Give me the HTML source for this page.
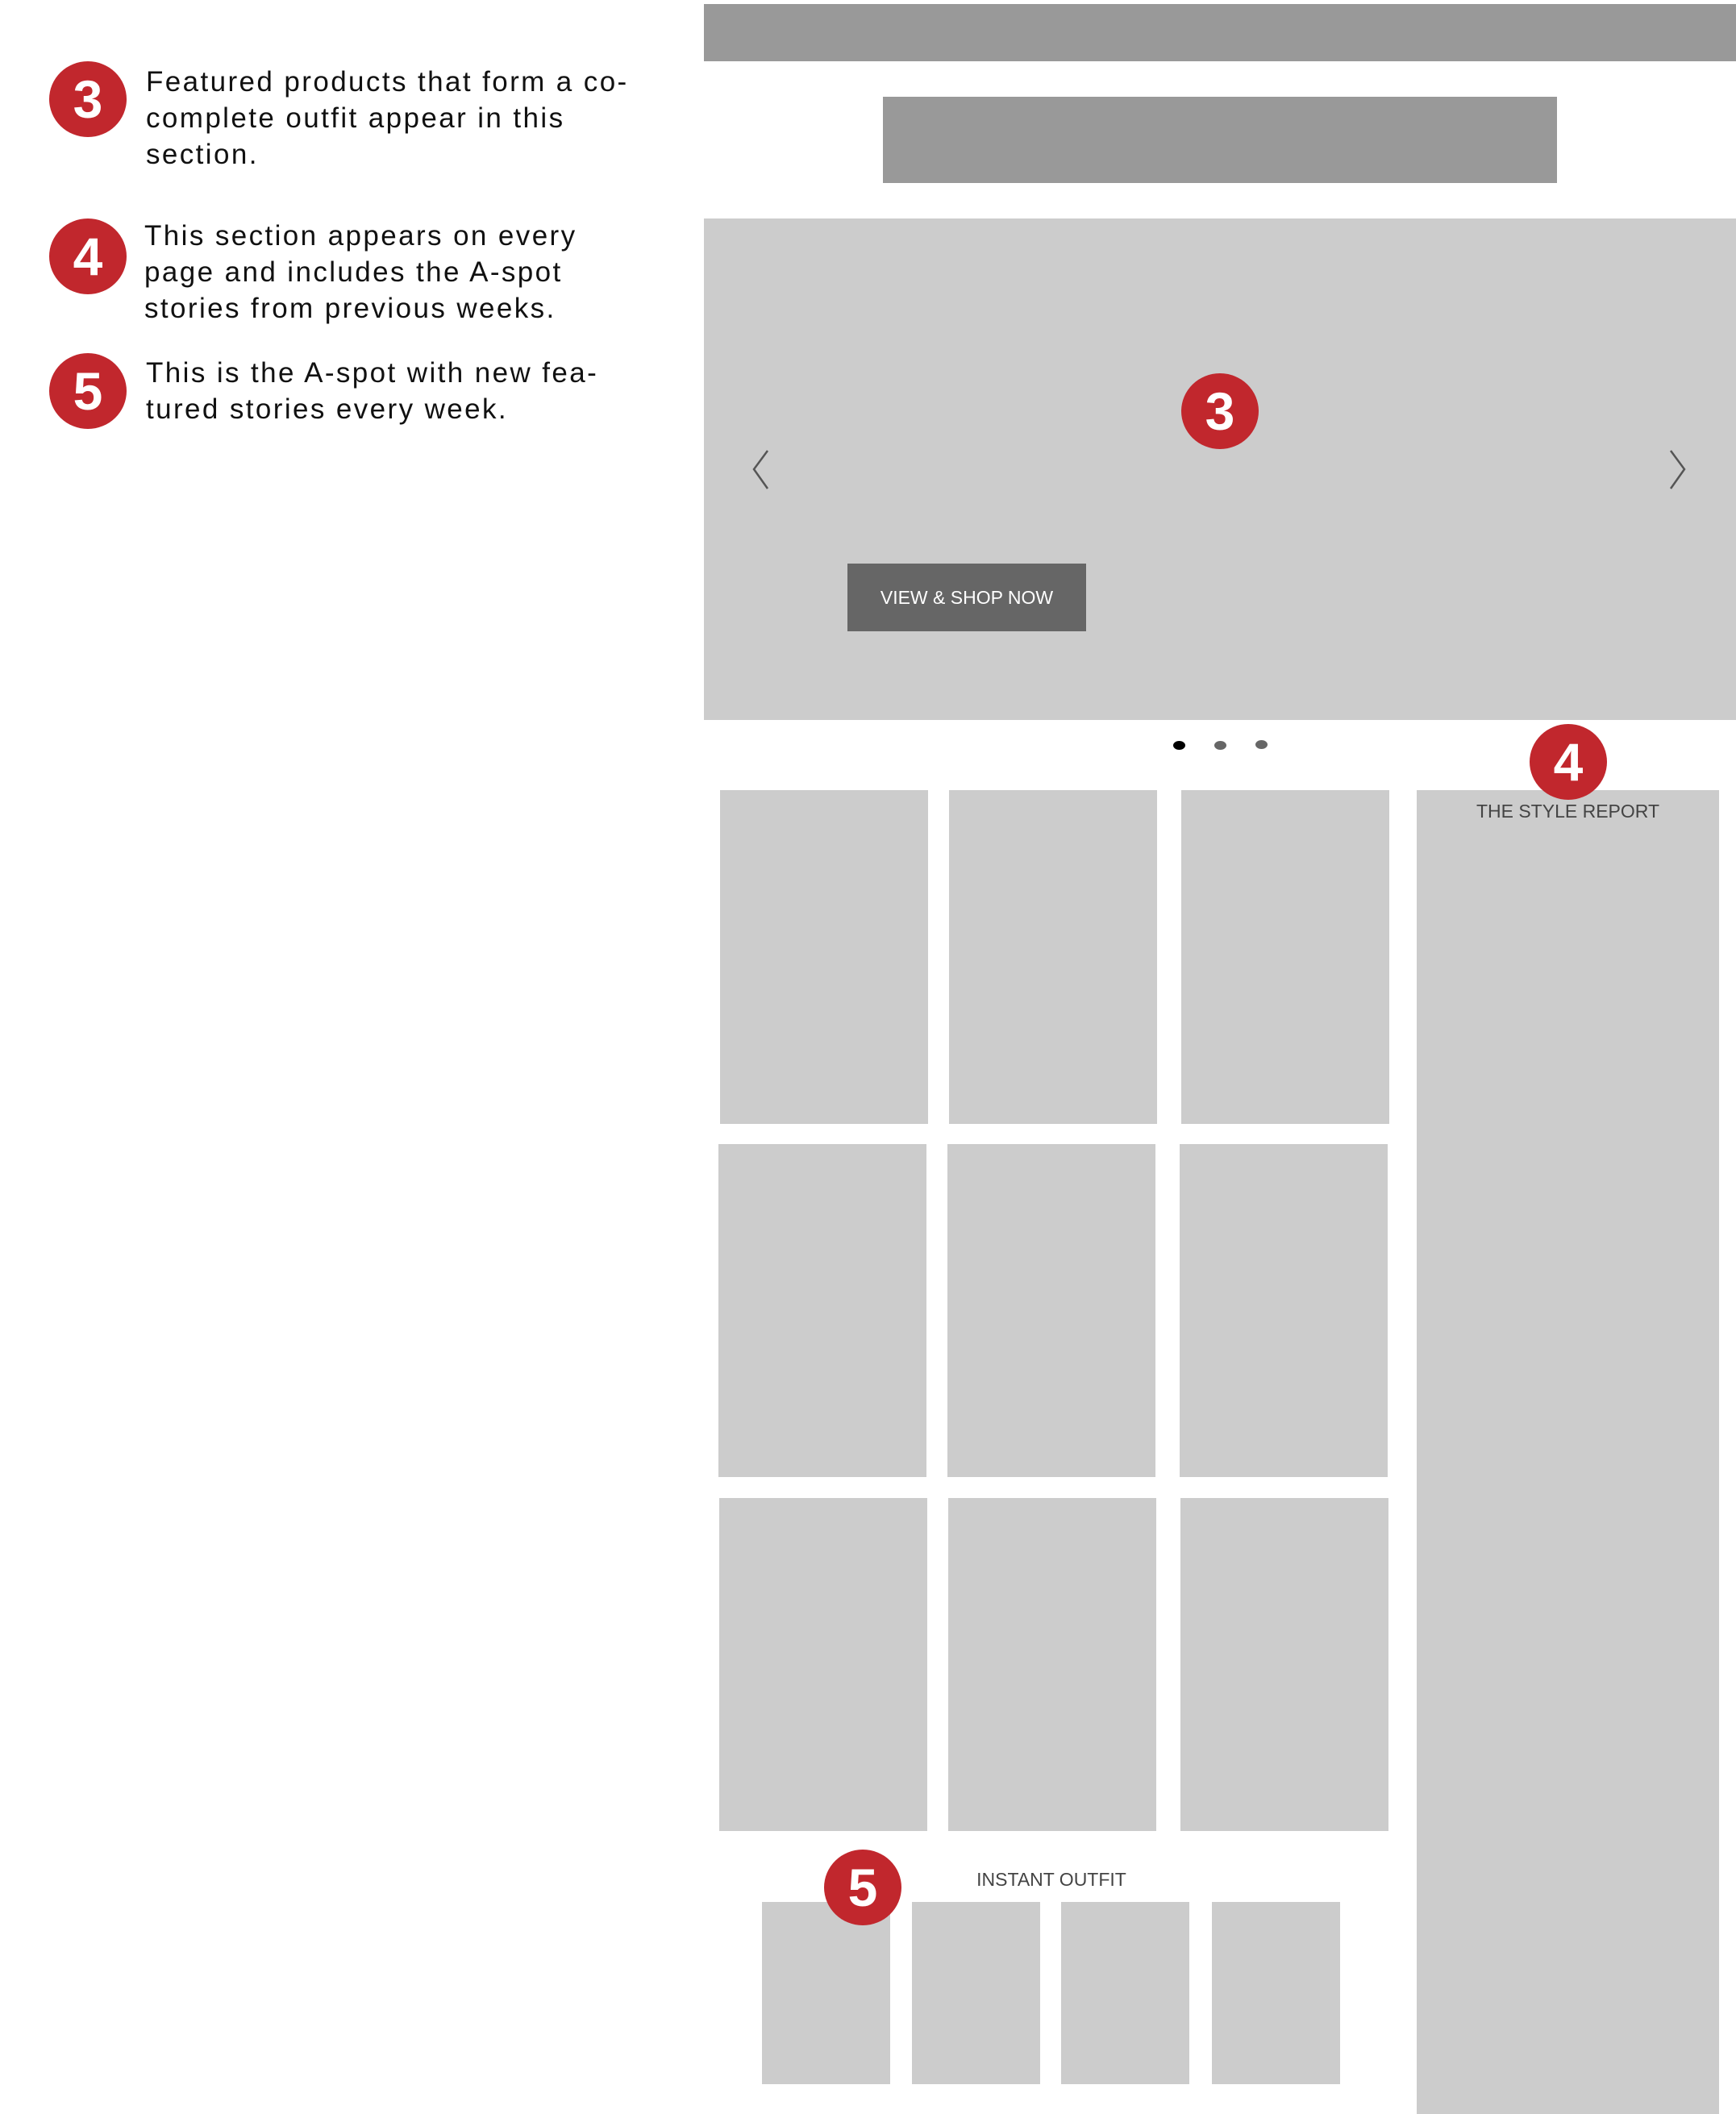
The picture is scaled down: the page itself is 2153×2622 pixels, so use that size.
<!DOCTYPE html>
<html><head><meta charset="utf-8"><style>
*{margin:0;padding:0;box-sizing:border-box}
body{width:2153px;height:2622px;background:#fff;position:relative;overflow:hidden;font-family:"Liberation Sans",sans-serif}
.a{position:absolute}
.g{background:#ccc;position:absolute}
.d{background:#999;position:absolute}
.c{position:absolute;width:96px;height:94px;border-radius:50%;background:#c1272d;color:#fff;font-weight:bold;font-size:66px;text-align:center;line-height:94px}
.t{position:absolute;left:181px;font-size:35px;line-height:45px;color:#111;width:700px;letter-spacing:2.4px;white-space:nowrap}
</style></head><body>
<div class="c" style="left:61px;top:76px">3</div>
<div class="t" style="top:79px">Featured products that form a co-<br>complete outfit appear in this<br>section.</div>
<div class="c" style="left:61px;top:271px">4</div>
<div class="t" style="top:270px;left:179px">This section appears on every<br>page and includes the A-spot<br>stories from previous weeks.</div>
<div class="c" style="left:61px;top:438px">5</div>
<div class="t" style="top:440px">This is the A-spot with new fea-<br>tured stories every week.</div>

<div class="d" style="left:873px;top:5px;width:1280px;height:71px"></div>
<div class="d" style="left:1095px;top:120px;width:836px;height:107px"></div>
<div class="g" style="left:873px;top:271px;width:1280px;height:622px"></div>
<div class="c" style="left:1465px;top:463px">3</div>
<svg class="a" style="left:928px;top:556px" width="30" height="54"><path d="M24 3 L7 26 L24 50" stroke="#555" stroke-width="2.5" fill="none"/></svg>
<svg class="a" style="left:2066px;top:556px" width="30" height="54"><path d="M6 3 L23 26 L6 50" stroke="#555" stroke-width="2.5" fill="none"/></svg>
<div class="a" style="left:1051px;top:699px;width:296px;height:84px;background:#666;color:#fff;font-size:23px;text-align:center;line-height:84px">VIEW &amp; SHOP NOW</div>
<div class="a" style="left:1455px;top:919px;width:15px;height:11px;border-radius:50%;background:#000"></div>
<div class="a" style="left:1506px;top:919px;width:15px;height:11px;border-radius:50%;background:#666"></div>
<div class="a" style="left:1557px;top:918px;width:15px;height:11px;border-radius:50%;background:#666"></div>

<div class="g" style="left:893px;top:980px;width:258px;height:414px"></div>
<div class="g" style="left:1177px;top:980px;width:258px;height:414px"></div>
<div class="g" style="left:1465px;top:980px;width:258px;height:414px"></div>
<div class="g" style="left:891px;top:1419px;width:258px;height:413px"></div>
<div class="g" style="left:1175px;top:1419px;width:258px;height:413px"></div>
<div class="g" style="left:1463px;top:1419px;width:258px;height:413px"></div>
<div class="g" style="left:892px;top:1858px;width:258px;height:413px"></div>
<div class="g" style="left:1176px;top:1858px;width:258px;height:413px"></div>
<div class="g" style="left:1464px;top:1858px;width:258px;height:413px"></div>

<div class="g" style="left:1757px;top:980px;width:375px;height:1642px"></div>
<div class="a" style="left:1757px;top:993px;width:375px;text-align:center;font-size:23px;color:#444">THE STYLE REPORT</div>
<div class="c" style="left:1897px;top:898px">4</div>

<div class="a" style="left:1104px;top:2318px;width:400px;text-align:center;font-size:23px;color:#444">INSTANT OUTFIT</div>
<div class="g" style="left:945px;top:2359px;width:159px;height:226px"></div>
<div class="g" style="left:1131px;top:2359px;width:159px;height:226px"></div>
<div class="g" style="left:1316px;top:2359px;width:159px;height:226px"></div>
<div class="g" style="left:1503px;top:2359px;width:159px;height:226px"></div>
<div class="c" style="left:1022px;top:2294px">5</div>
</body></html>
